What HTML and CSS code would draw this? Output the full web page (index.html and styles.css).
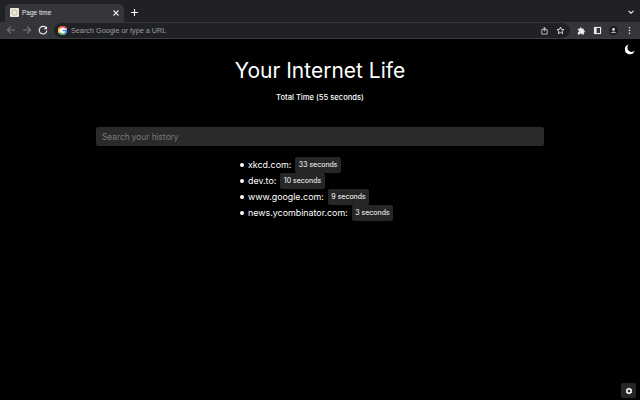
FILE: index.html
```html
<!DOCTYPE html>
<html lang="en">
<head>
<meta charset="utf-8">
<title>Page time</title>
<link rel="stylesheet" href="styles.css">
</head>
<body>
<div class="chrome">
  <div class="tabstrip">
    <div class="tab">
      <svg class="favicon" viewBox="0 0 10 10"><rect width="10" height="10" rx="1" fill="#efe9dc"/><circle cx="5" cy="5" r="3" fill="none" stroke="#a9a294" stroke-width=".8"/></svg>
      <span class="tab-title">Page time</span>
      <svg class="tab-close" viewBox="0 0 8 8"><path d="M1.500 1.500l5 5M6.500 1.500l-5 5" stroke="#e8eaed" stroke-width="1.100"/></svg>
    </div>
    <svg class="newtab" viewBox="0 0 10 10"><path d="M5 1v8M1 5h8" stroke="#f1f3f4" stroke-width="1.300"/></svg>
    <svg class="tabmenu" viewBox="0 0 8 8"><path d="M1.500 2.800L4 5.200l2.500-2.400" fill="none" stroke="#e8eaed" stroke-width="1.100"/></svg>
  </div>
  <div class="toolbar">
    <svg class="nav" viewBox="0 0 10 10"><path d="M9 5H1.500M4.800 1.600L1.400 5l3.400 3.400" fill="none" stroke="#75777a" stroke-width="1.100"/></svg>
    <svg class="nav" viewBox="0 0 10 10"><path d="M1 5h7.500M5.200 1.600L8.600 5 5.200 8.400" fill="none" stroke="#75777a" stroke-width="1.100"/></svg>
    <svg class="nav" viewBox="0 0 10 10"><path d="M8.400 3.400A3.800 3.800 0 1 0 8.800 5.600" fill="none" stroke="#e8eaed" stroke-width="1.100"/><path d="M9 1v3.200H5.800z" fill="#e8eaed"/></svg>
    <div class="omnibox">
      <svg class="glogo" viewBox="0 0 10 10">
        <circle cx="5" cy="5" r="5" fill="#fff"/>
        <path d="M1.400 2.800A4.200 4.200 0 0 1 8.400 2.500" fill="none" stroke="#ea4335" stroke-width="1.700"/>
        <path d="M1.400 2.800A4.200 4.200 0 0 0 1.700 7.600" fill="none" stroke="#fbbc05" stroke-width="1.700"/>
        <path d="M1.700 7.600A4.200 4.200 0 0 0 7.900 8" fill="none" stroke="#34a853" stroke-width="1.700"/>
        <path d="M7.900 8A4.200 4.200 0 0 0 9.200 5H5.200" fill="none" stroke="#4285f4" stroke-width="1.700"/>
      </svg>
      <span class="url">Search Google or type a URL</span>
      <svg class="omni-icon" viewBox="0 0 10 10"><path d="M2 4h6v5H2z" fill="none" stroke="#c4c7c9" stroke-width="1"/><path d="M3.500 3L5 1.300 6.500 3M5 1.500V6" fill="none" stroke="#c4c7c9" stroke-width=".9"/></svg>
      <svg class="omni-icon" viewBox="0 0 10 10"><path d="M5 1.200l1.100 2.500 2.700.3-2 1.800.6 2.700L5 7.100 2.600 8.500l.6-2.700-2-1.800 2.700-.3z" fill="none" stroke="#e8eaed" stroke-width="1"/></svg>
    </div>
    <svg class="tool" viewBox="0 0 10 10"><path d="M1 3h2a1.200 1.200 0 0 1 2.400 0h2.200v2a1.200 1.200 0 0 1 0 2.400V9.400H5.400a1.200 1.200 0 0 0-2.400 0H1V7a1.200 1.200 0 0 0 0-2.400z" fill="#e8eaed"/></svg>
    <svg class="tool" viewBox="0 0 10 10"><path d="M1 1h8v8H1z" fill="#e8eaed"/><path d="M4 2.200h3.800v5.600H4z" fill="#35363a"/></svg>
    <svg class="tool" viewBox="0 0 10 10"><circle cx="5" cy="5" r="5" fill="#1b1c1e"/><circle cx="5" cy="3.800" r="1.500" fill="#e8eaed"/><path d="M2.200 7.600c.5-1.500 5.100-1.500 5.600 0z" fill="#e8eaed"/></svg>
    <svg class="tool" viewBox="0 0 10 10"><circle cx="5" cy="2" r=".9" fill="#e8eaed"/><circle cx="5" cy="5" r=".9" fill="#e8eaed"/><circle cx="5" cy="8" r=".9" fill="#e8eaed"/></svg>
  </div>
</div>
<main class="page">
  <button class="theme" aria-label="Theme">
    <svg viewBox="0 0 12 12"><path d="M5.200.6a5.400 5.400 0 1 0 6.300 6.800A4.600 4.600 0 0 1 5.200.6z" fill="#fff"/></svg>
  </button>
  <h1 class="title">Your Internet Life</h1>
  <p class="total">Total Time (55 seconds)</p>
  <input class="search" type="text" placeholder="Search your history">
  <ul class="sites">
    <li><span class="site">xkcd.com:</span><span class="badge">33 seconds</span></li>
    <li><span class="site">dev.to:</span><span class="badge">10 seconds</span></li>
    <li><span class="site">www.google.com:</span><span class="badge">9 seconds</span></li>
    <li><span class="site">news.ycombinator.com:</span><span class="badge">3 seconds</span></li>
  </ul>
  <button class="settings" aria-label="Settings">
    <svg viewBox="0 0 10 10"><circle cx="5" cy="5" r="2.700" fill="none" stroke="#e8eaed" stroke-width="2"/><path d="M5 .8v1.500M5 7.700v1.500M1.400 2.900l1.300.8M7.300 6.300l1.300.8M1.400 7.100l1.300-.8M7.300 3.700l1.300-.8" stroke="#e8eaed" stroke-width="1.300"/></svg>
  </button>
</main>
</body>
</html>
```
FILE: styles.css
```css
* { box-sizing: border-box; }
html, body { margin: 0; height: 100%; }
body {
  display: flex;
  flex-direction: column;
  width: 640px;
  height: 400px;
  overflow: hidden;
  background: #000;
  color: #fff;
  font-family: Inter, "Liberation Sans", sans-serif;
}
.chrome { flex: none; opacity: .999; }
.tabstrip {
  height: 22px;
  background: #202124;
  display: flex;
  align-items: flex-end;
  padding-left: 5px;
}
.tab {
  width: 119px;
  height: 18px;
  background: #35363a;
  border-radius: 5px 5px 0 0;
  display: flex;
  align-items: center;
  padding: 0 4px 1px 5px;
}
.favicon { width: 9px; height: 9px; flex: none; }
.tab-title {
  margin-left: 3px;
  font: 6.500px "Liberation Sans", sans-serif;
  color: #e8eaed;
  flex: 1;
}
.tab-close { width: 8px; height: 8px; flex: none; }
.newtab { width: 9px; height: 9px; margin: 0 0 5px 6px; flex: none; }
.tabmenu { width: 8px; height: 8px; margin: 0 5px 6px auto; flex: none; }
.toolbar {
  height: 17px;
  background: #35363a;
  display: flex;
  align-items: center;
  padding: 0 6px;
  border-bottom: 1px solid #3c3d41;
}
.nav { width: 10px; height: 10px; margin-right: 6px; flex: none; }
.omnibox {
  flex: 1;
  height: 15px;
  background: #202124;
  border-radius: 8px;
  display: flex;
  align-items: center;
  padding: 0 5px 0 4px;
}
.glogo { width: 9px; height: 9px; flex: none; }
.url {
  margin-left: 4px;
  font: 7.200px "Liberation Sans", sans-serif;
  letter-spacing: .04px;
  color: #9e9fa1;
  flex: 1;
}
.omni-icon { width: 9px; height: 9px; margin-left: 7px; flex: none; }
.tool { width: 9px; height: 9px; margin-left: 7px; flex: none; }
.page {
  position: relative;
  flex: 1;
  background: #000;
  display: flex;
  flex-direction: column;
  align-items: center;
  padding-top: 17px;
  opacity: .999;
}
.title {
  margin: 0;
  font-size: 21px;
  font-weight: 400;
  line-height: 30px;
}
.total {
  margin: 6px 0 0;
  font-size: 7.600px;
  line-height: 12px;
  font-weight: 500;
}
.search {
  width: 448px;
  height: 19px;
  margin-top: 23px;
  padding: 0 6px;
  border: 0;
  border-radius: 2px;
  background: #2a2a2a;
  color: #fff;
  font: 8.300px Inter, sans-serif;
}
.search::placeholder { color: #7a7a7a; opacity: 1; }
.sites {
  align-self: flex-start;
  list-style: none;
  margin: 11px 0 0 240px;
  padding: 0;
}
.sites li {
  display: flex;
  height: 16px;
  align-items: center;
  font-size: 8.900px;
  line-height: 16px;
}
.sites li::before {
  content: "";
  width: 4px;
  height: 4px;
  margin-right: 4px;
  border-radius: 50%;
  background: #fff;
}
.site { font-weight: 400; color: #fff; }
.badge {
  margin-left: 4px;
  height: 16px;
  padding: 0 3.500px;
  border-radius: 2px;
  background: #262626;
  font-size: 7px;
  font-weight: 400;
  line-height: 16px;
}
.theme, .settings {
  position: absolute;
  border: 0;
  padding: 0;
  background: none;
}
.theme { top: 5px; right: 5px; width: 11px; height: 11px; }
.settings {
  right: 4px;
  bottom: 2px;
  width: 15px;
  height: 15px;
  padding: 3.500px;
  background: #262626;
  border-radius: 2px;
  display: flex;
}
.theme svg, .settings svg { width: 100%; height: 100%; display: block; }
```
